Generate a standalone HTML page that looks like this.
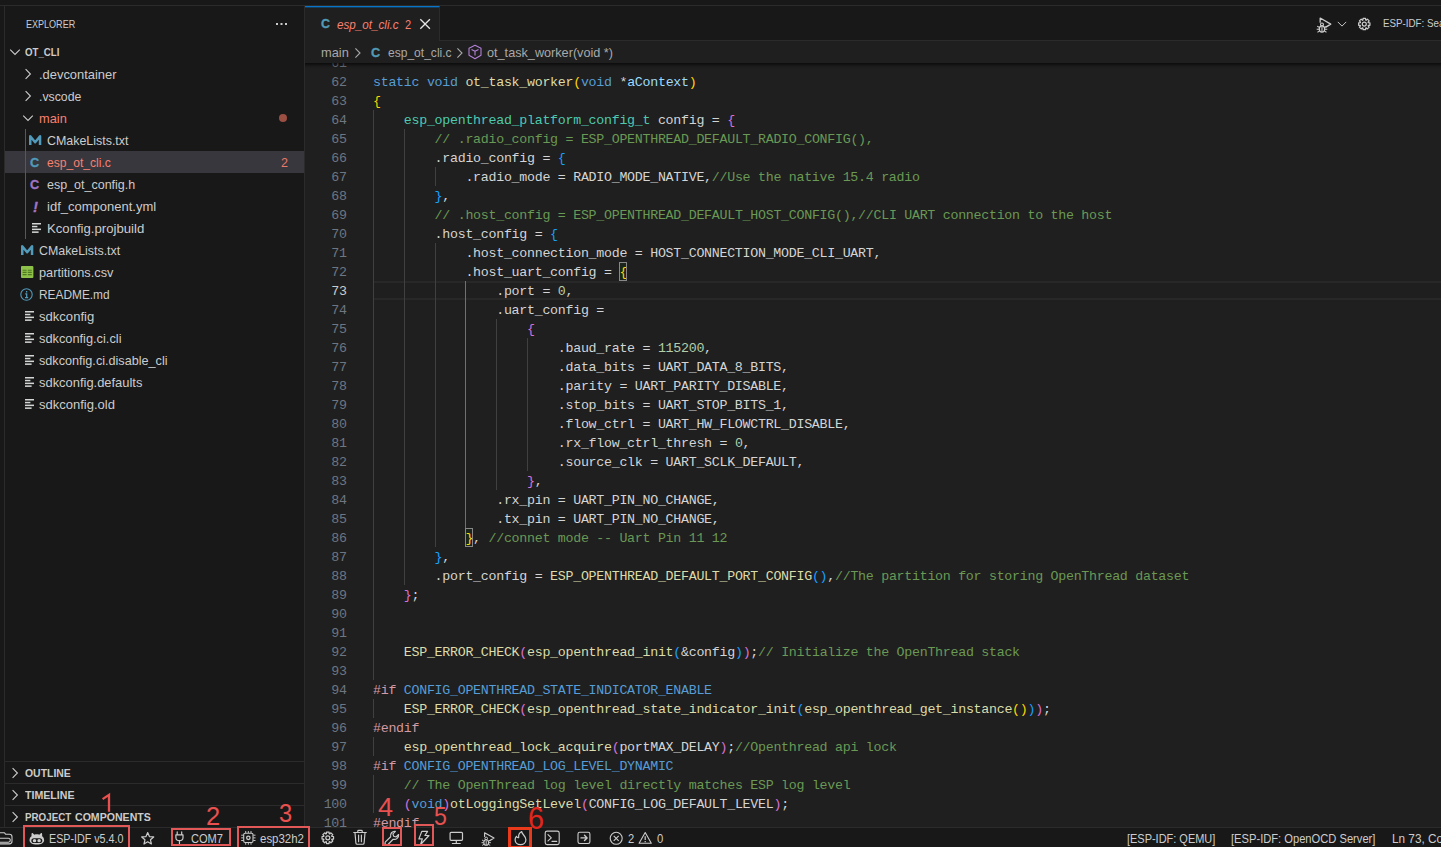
<!DOCTYPE html>
<html><head><meta charset="utf-8"><title>esp_ot_cli.c - ot_cli - Visual Studio Code</title>
<style>
*{box-sizing:border-box;margin:0;padding:0}
html,body{width:1441px;height:847px;overflow:hidden;background:#181818}
body{position:relative;font-family:'Liberation Sans',sans-serif;font-size:13px;color:#ccc}
.abs{position:absolute}
.t{position:absolute;white-space:pre;transform-origin:0 50%;font-family:'Liberation Sans',sans-serif}
#topline{left:0;top:5px;width:1441px;height:1px;background:#2b2b2b}
#leftline{left:4px;top:6px;width:1px;height:821px;background:#2b2b2b}
#sidebar{left:5px;top:6px;width:300px;height:821px;background:#181818;border-right:1px solid #2b2b2b}
#sel{left:5px;top:151px;width:299px;height:22px;background:#37373d}
#iguide{left:25px;top:129px;width:1px;height:110px;background:#585858}
.pline{left:5px;width:299px;height:1px;background:#2b2b2b}
#tabbar{left:305px;top:6px;width:1136px;height:35px;background:#181818;border-bottom:1px solid #2b2b2b}
#tab{left:305px;top:6px;width:135px;height:35px;background:#1f1f1f;border-top:1px solid #0a74c8;border-right:1px solid #2b2b2b;box-shadow:inset 0 1px 0 rgba(0,120,212,.35)}
#editor{left:305px;top:41px;width:1136px;height:786px;background:#1f1f1f;overflow:hidden}
#shadow{left:305px;top:63px;width:1136px;height:6px;background:linear-gradient(rgba(0,0,0,.62) 0,rgba(0,0,0,.5) 1px,rgba(0,0,0,.34) 2px,rgba(0,0,0,.18) 3px,rgba(0,0,0,.07) 4.5px,rgba(0,0,0,0) 6px)}
#bcbar{left:305px;top:41px;width:1136px;height:22px;background:#1f1f1f}
#status{left:0;top:827px;width:1441px;height:20px;background:#181818;border-top:1px solid #2b2b2b}
#code{left:0;top:0;width:1441px;height:827px;overflow:hidden;clip-path:inset(63px 0 0 305px)}
.ln{position:absolute;left:305px;width:42px;height:19px;line-height:19px;margin-top:.9px;text-align:right;color:#6e7681;font-family:'Liberation Mono',monospace;font-size:13.3px;letter-spacing:-.28px;padding-right:.28px}
.ln.cur{color:#cccccc}
.cl{position:absolute;left:373px;height:19px;line-height:19px;margin-top:.9px;white-space:pre;font-family:'Liberation Mono',monospace;font-size:13.3px;letter-spacing:-.28px;color:#d4d4d4}
.k{color:#569cd6}.f{color:#dcdcaa}.w{color:#d4d4d4}.p{color:#9cdcfe}.ty{color:#4ec9b0}.c{color:#6a9955}.n{color:#b5cea8}
.b1{color:#ffd700}.b2{color:#da70d6}.b3{color:#179fff}.pp{color:#d399a4}
.bx{outline:1px solid #888;outline-offset:-1px;padding:2.6px 0 1.4px;background:rgba(0,100,0,.09)}
.g{position:absolute;width:1px;background:#404040}
.ga{background:#707070}
#curline{left:373px;top:281px;width:1068px;height:19px;border-top:2px solid #282828;border-bottom:2px solid #282828}
.rb{position:absolute;border:2px solid #e25757}
svg{position:absolute;overflow:visible}
</style></head><body>
<div class="abs" id="topline"></div>
<div class="abs" id="sidebar"></div>
<div class="abs" id="leftline"></div>
<div class="abs" id="sel"></div>
<div class="abs" id="iguide"></div>
<div class="abs pline" style="top:761px"></div>
<div class="abs pline" style="top:783px"></div>
<div class="abs pline" style="top:805px"></div>
<div class="abs" id="tabbar"></div>
<div class="abs" id="editor"></div>
<div class="abs" id="tab"></div>
<div class="abs" id="bcbar"></div>
<div class="abs" id="code">
<div class="abs" id="curline"></div>
<div class="ln" style="top:53px">61</div>
<div class="ln" style="top:72px">62</div>
<div class="cl" style="top:72px"><span class="k">static</span><span class="w"> </span><span class="k">void</span><span class="w"> </span><span class="f">ot_task_worker</span><span class="b1">(</span><span class="k">void</span><span class="w"> *</span><span class="p">aContext</span><span class="b1">)</span></div>
<div class="ln" style="top:91px">63</div>
<div class="cl" style="top:91px"><span class="b1">{</span></div>
<div class="ln" style="top:110px">64</div>
<div class="cl" style="top:110px"><span class="w">    </span><span class="ty">esp_openthread_platform_config_t</span><span class="w"> config = </span><span class="b2">{</span></div>
<div class="ln" style="top:129px">65</div>
<div class="cl" style="top:129px"><span class="w">        </span><span class="c">// .radio_config = ESP_OPENTHREAD_DEFAULT_RADIO_CONFIG(),</span></div>
<div class="ln" style="top:148px">66</div>
<div class="cl" style="top:148px"><span class="w">        .radio_config = </span><span class="b3">{</span></div>
<div class="ln" style="top:167px">67</div>
<div class="cl" style="top:167px"><span class="w">            .radio_mode = RADIO_MODE_NATIVE,</span><span class="c">//Use the native 15.4 radio</span></div>
<div class="ln" style="top:186px">68</div>
<div class="cl" style="top:186px"><span class="w">        </span><span class="b3">}</span><span class="w">,</span></div>
<div class="ln" style="top:205px">69</div>
<div class="cl" style="top:205px"><span class="w">        </span><span class="c">// .host_config = ESP_OPENTHREAD_DEFAULT_HOST_CONFIG(),//CLI UART connection to the host</span></div>
<div class="ln" style="top:224px">70</div>
<div class="cl" style="top:224px"><span class="w">        .host_config = </span><span class="b3">{</span></div>
<div class="ln" style="top:243px">71</div>
<div class="cl" style="top:243px"><span class="w">            .host_connection_mode = HOST_CONNECTION_MODE_CLI_UART,</span></div>
<div class="ln" style="top:262px">72</div>
<div class="cl" style="top:262px"><span class="w">            .host_uart_config = </span><span class="b1 bx">{</span></div>
<div class="ln cur" style="top:281px">73</div>
<div class="cl" style="top:281px"><span class="w">                .port = </span><span class="n">0</span><span class="w">,</span></div>
<div class="ln" style="top:300px">74</div>
<div class="cl" style="top:300px"><span class="w">                .uart_config =</span></div>
<div class="ln" style="top:319px">75</div>
<div class="cl" style="top:319px"><span class="w">                    </span><span class="b2">{</span></div>
<div class="ln" style="top:338px">76</div>
<div class="cl" style="top:338px"><span class="w">                        .baud_rate = </span><span class="n">115200</span><span class="w">,</span></div>
<div class="ln" style="top:357px">77</div>
<div class="cl" style="top:357px"><span class="w">                        .data_bits = UART_DATA_8_BITS,</span></div>
<div class="ln" style="top:376px">78</div>
<div class="cl" style="top:376px"><span class="w">                        .parity = UART_PARITY_DISABLE,</span></div>
<div class="ln" style="top:395px">79</div>
<div class="cl" style="top:395px"><span class="w">                        .stop_bits = UART_STOP_BITS_1,</span></div>
<div class="ln" style="top:414px">80</div>
<div class="cl" style="top:414px"><span class="w">                        .flow_ctrl = UART_HW_FLOWCTRL_DISABLE,</span></div>
<div class="ln" style="top:433px">81</div>
<div class="cl" style="top:433px"><span class="w">                        .rx_flow_ctrl_thresh = </span><span class="n">0</span><span class="w">,</span></div>
<div class="ln" style="top:452px">82</div>
<div class="cl" style="top:452px"><span class="w">                        .source_clk = UART_SCLK_DEFAULT,</span></div>
<div class="ln" style="top:471px">83</div>
<div class="cl" style="top:471px"><span class="w">                    </span><span class="b2">}</span><span class="w">,</span></div>
<div class="ln" style="top:490px">84</div>
<div class="cl" style="top:490px"><span class="w">                .rx_pin = UART_PIN_NO_CHANGE,</span></div>
<div class="ln" style="top:509px">85</div>
<div class="cl" style="top:509px"><span class="w">                .tx_pin = UART_PIN_NO_CHANGE,</span></div>
<div class="ln" style="top:528px">86</div>
<div class="cl" style="top:528px"><span class="w">            </span><span class="b1 bx">}</span><span class="w">, </span><span class="c">//connet mode -- Uart Pin 11 12</span></div>
<div class="ln" style="top:547px">87</div>
<div class="cl" style="top:547px"><span class="w">        </span><span class="b3">}</span><span class="w">,</span></div>
<div class="ln" style="top:566px">88</div>
<div class="cl" style="top:566px"><span class="w">        .port_config = </span><span class="f">ESP_OPENTHREAD_DEFAULT_PORT_CONFIG</span><span class="b3">()</span><span class="w">,</span><span class="c">//The partition for storing OpenThread dataset</span></div>
<div class="ln" style="top:585px">89</div>
<div class="cl" style="top:585px"><span class="w">    </span><span class="b2">}</span><span class="w">;</span></div>
<div class="ln" style="top:604px">90</div>
<div class="ln" style="top:623px">91</div>
<div class="ln" style="top:642px">92</div>
<div class="cl" style="top:642px"><span class="w">    </span><span class="f">ESP_ERROR_CHECK</span><span class="b2">(</span><span class="f">esp_openthread_init</span><span class="b3">(</span><span class="w">&amp;config</span><span class="b3">)</span><span class="b2">)</span><span class="w">;</span><span class="c">// Initialize the OpenThread stack</span></div>
<div class="ln" style="top:661px">93</div>
<div class="ln" style="top:680px">94</div>
<div class="cl" style="top:680px"><span class="pp">#if</span><span class="w"> </span><span class="k">CONFIG_OPENTHREAD_STATE_INDICATOR_ENABLE</span></div>
<div class="ln" style="top:699px">95</div>
<div class="cl" style="top:699px"><span class="w">    </span><span class="f">ESP_ERROR_CHECK</span><span class="b2">(</span><span class="f">esp_openthread_state_indicator_init</span><span class="b3">(</span><span class="f">esp_openthread_get_instance</span><span class="b1">()</span><span class="b3">)</span><span class="b2">)</span><span class="w">;</span></div>
<div class="ln" style="top:718px">96</div>
<div class="cl" style="top:718px"><span class="pp">#endif</span></div>
<div class="ln" style="top:737px">97</div>
<div class="cl" style="top:737px"><span class="w">    </span><span class="f">esp_openthread_lock_acquire</span><span class="b2">(</span><span class="w">portMAX_DELAY</span><span class="b2">)</span><span class="w">;</span><span class="c">//Openthread api lock</span></div>
<div class="ln" style="top:756px">98</div>
<div class="cl" style="top:756px"><span class="pp">#if</span><span class="w"> </span><span class="k">CONFIG_OPENTHREAD_LOG_LEVEL_DYNAMIC</span></div>
<div class="ln" style="top:775px">99</div>
<div class="cl" style="top:775px"><span class="w">    </span><span class="c">// The OpenThread log level directly matches ESP log level</span></div>
<div class="ln" style="top:794px">100</div>
<div class="cl" style="top:794px"><span class="w">    </span><span class="b2">(</span><span class="k">void</span><span class="b2">)</span><span class="f">otLoggingSetLevel</span><span class="b2">(</span><span class="w">CONFIG_LOG_DEFAULT_LEVEL</span><span class="b2">)</span><span class="w">;</span></div>
<div class="ln" style="top:813px">101</div>
<div class="cl" style="top:813px"><span class="pp">#endif</span></div>
<div class="g" style="left:373.0px;top:110px;height:570px"></div>
<div class="g" style="left:373.0px;top:699px;height:19px"></div>
<div class="g" style="left:373.0px;top:737px;height:19px"></div>
<div class="g" style="left:373.0px;top:775px;height:38px"></div>
<div class="g" style="left:403.8px;top:129px;height:456px"></div>
<div class="g" style="left:434.6px;top:167px;height:19px"></div>
<div class="g" style="left:434.6px;top:243px;height:304px"></div>
<div class="g ga" style="left:465.4px;top:281px;height:247px"></div>
<div class="g" style="left:496.2px;top:319px;height:171px"></div>
<div class="g" style="left:527.0px;top:338px;height:133px"></div>
</div>
<div class="abs" id="shadow"></div>
<div class="abs" id="status"></div>
<svg style="left:7px;top:44px" width="16" height="16" viewBox="0 0 16 16" ><path d="M3.2 5.6 L8 10.4 L12.8 5.6" fill="none" stroke="#cccccc" stroke-width="1.1" /></svg>
<svg style="left:20px;top:66px" width="16" height="16" viewBox="0 0 16 16" ><path d="M5.6 3.2 L10.4 8 L5.6 12.8" fill="none" stroke="#cccccc" stroke-width="1.1" /></svg>
<svg style="left:20px;top:88px" width="16" height="16" viewBox="0 0 16 16" ><path d="M5.6 3.2 L10.4 8 L5.6 12.8" fill="none" stroke="#cccccc" stroke-width="1.1" /></svg>
<svg style="left:20px;top:110px" width="16" height="16" viewBox="0 0 16 16" ><path d="M3.2 5.6 L8 10.4 L12.8 5.6" fill="none" stroke="#cccccc" stroke-width="1.1" /></svg>
<svg style="left:7px;top:765px" width="16" height="16" viewBox="0 0 16 16" ><path d="M5.6 3.2 L10.4 8 L5.6 12.8" fill="none" stroke="#cccccc" stroke-width="1.1" /></svg>
<svg style="left:7px;top:787px" width="16" height="16" viewBox="0 0 16 16" ><path d="M5.6 3.2 L10.4 8 L5.6 12.8" fill="none" stroke="#cccccc" stroke-width="1.1" /></svg>
<svg style="left:7px;top:809px" width="16" height="16" viewBox="0 0 16 16" ><path d="M5.6 3.2 L10.4 8 L5.6 12.8" fill="none" stroke="#cccccc" stroke-width="1.1" /></svg>
<div class="abs" style="left:276px;top:23px;width:2px;height:2px;background:#ccc;box-shadow:4.5px 0 0 #ccc,9px 0 0 #ccc"></div>
<div class="abs" style="left:279px;top:114px;width:8px;height:8px;border-radius:4px;background:#9b4f43"></div>
<svg style="left:32.3px;top:223.2px" width="10" height="10" viewBox="0 0 10 10"><rect x="0" y="0" width="9" height="1.5" fill="#d4d7d6"/><rect x="0" y="2.8" width="5.4" height="1.5" fill="#d4d7d6"/><rect x="0" y="5.6" width="9" height="1.5" fill="#d4d7d6"/><rect x="0" y="8.4" width="6.6" height="1.5" fill="#d4d7d6"/></svg>
<svg style="left:24.5px;top:311.2px" width="10" height="10" viewBox="0 0 10 10"><rect x="0" y="0" width="9" height="1.5" fill="#d4d7d6"/><rect x="0" y="2.8" width="5.4" height="1.5" fill="#d4d7d6"/><rect x="0" y="5.6" width="9" height="1.5" fill="#d4d7d6"/><rect x="0" y="8.4" width="6.6" height="1.5" fill="#d4d7d6"/></svg>
<svg style="left:24.5px;top:333.2px" width="10" height="10" viewBox="0 0 10 10"><rect x="0" y="0" width="9" height="1.5" fill="#d4d7d6"/><rect x="0" y="2.8" width="5.4" height="1.5" fill="#d4d7d6"/><rect x="0" y="5.6" width="9" height="1.5" fill="#d4d7d6"/><rect x="0" y="8.4" width="6.6" height="1.5" fill="#d4d7d6"/></svg>
<svg style="left:24.5px;top:355.2px" width="10" height="10" viewBox="0 0 10 10"><rect x="0" y="0" width="9" height="1.5" fill="#d4d7d6"/><rect x="0" y="2.8" width="5.4" height="1.5" fill="#d4d7d6"/><rect x="0" y="5.6" width="9" height="1.5" fill="#d4d7d6"/><rect x="0" y="8.4" width="6.6" height="1.5" fill="#d4d7d6"/></svg>
<svg style="left:24.5px;top:377.2px" width="10" height="10" viewBox="0 0 10 10"><rect x="0" y="0" width="9" height="1.5" fill="#d4d7d6"/><rect x="0" y="2.8" width="5.4" height="1.5" fill="#d4d7d6"/><rect x="0" y="5.6" width="9" height="1.5" fill="#d4d7d6"/><rect x="0" y="8.4" width="6.6" height="1.5" fill="#d4d7d6"/></svg>
<svg style="left:24.5px;top:399.2px" width="10" height="10" viewBox="0 0 10 10"><rect x="0" y="0" width="9" height="1.5" fill="#d4d7d6"/><rect x="0" y="2.8" width="5.4" height="1.5" fill="#d4d7d6"/><rect x="0" y="5.6" width="9" height="1.5" fill="#d4d7d6"/><rect x="0" y="8.4" width="6.6" height="1.5" fill="#d4d7d6"/></svg>
<svg style="left:28.75px;top:134.8px" width="12.3" height="10" viewBox="0 0 12.3 10"><path d="M1.25 10 V1.2 L6.15 7.2 L11.05 1.2 V10" fill="none" stroke="#519aba" stroke-width="2.5" stroke-linejoin="round"/></svg>
<svg style="left:20.6px;top:244.6px" width="12.3" height="10" viewBox="0 0 12.3 10"><path d="M1.25 10 V1.2 L6.15 7.2 L11.05 1.2 V10" fill="none" stroke="#519aba" stroke-width="2.5" stroke-linejoin="round"/></svg>
<svg style="left:20.6px;top:266px" width="12.4" height="12" viewBox="0 0 12.4 12"><rect width="12.4" height="12" rx="1" fill="#8dc149"/><path d="M1.6 4.2H5.6M6.8 4.2H10.8M1.6 6.4H5.6M6.8 6.4H10.8M1.6 8.6H5.6M6.8 8.6H10.8" stroke="#4f7a22" stroke-width="1.1"/></svg>
<svg style="left:20.4px;top:287.8px" width="13" height="13" viewBox="0 0 13 13"><circle cx="6.5" cy="6.5" r="5.7" fill="none" stroke="#519aba" stroke-width="1.1"/><path d="M6.6 3.1v1.5M5.2 5.8h1.5v3.6M5 9.6h3.2" stroke="#519aba" stroke-width="1.3" fill="none"/></svg>
<svg style="left:417px;top:16px" width="16" height="16" viewBox="0 0 16 16" ><path d="M3.3 3.2 L12.9 12.8 M12.9 3.2 L3.3 12.8" fill="none" stroke="#e4e4e4" stroke-width="1.3" /></svg>
<svg style="left:350px;top:44.5px" width="16" height="16" viewBox="0 0 16 16" ><path d="M5.4 3.4 L10 8 L5.4 12.6" fill="none" stroke="#a9a9a9" stroke-width="1.1" /></svg>
<svg style="left:452px;top:44.5px" width="16" height="16" viewBox="0 0 16 16" ><path d="M5.4 3.4 L10 8 L5.4 12.6" fill="none" stroke="#a9a9a9" stroke-width="1.1" /></svg>
<svg style="left:467px;top:44px" width="16" height="16" viewBox="0 0 16 16" ><path d="M8 1.3 L14 4.3 V11.3 L8 14.7 L2 11.3 V4.3 Z M4.5 5.5 L8 7.3 L11.5 5.5 M8 7.3 V11.5" fill="none" stroke="#b180d7" stroke-width="1.1" stroke-linejoin="round"/></svg>
<svg style="left:1315.3px;top:15.0px" width="18" height="18" viewBox="0 0 16 16" ><path d="M4.6 6.4 V2.7 L14 8.1 L9.7 10.8" fill="none" stroke="#cccccc" stroke-width="1.15" stroke-linejoin="round" stroke-linecap="round"/><ellipse cx="6.2" cy="12.5" rx="2.4" ry="2.8" fill="none" stroke="#ccc" stroke-width="1.1"/><circle cx="6.2" cy="8.4" r="1.3" fill="none" stroke="#ccc" stroke-width="1.0"/><path d="M3.8 11 L2 10 M3.7 12.7 H1.5 M4 14.3 L2.2 15.4 M8.6 11 L10.4 10 M8.7 12.7 H10.9 M8.4 14.3 L10.2 15.4 M6.2 10.6 V15" fill="none" stroke="#cccccc" stroke-width="0.95" /></svg>
<svg style="left:1334.5px;top:17.3px" width="14" height="14" viewBox="0 0 16 16" ><path d="M3.2 5.6 L8 10.4 L12.8 5.6" fill="none" stroke="#cccccc" stroke-width="1.1" /></svg>
<svg style="left:0;top:822px" width="1441" height="25" viewBox="0 822 1441 25"><path d="M-1 832.8 H4.5 L5.8 834.3 H9.4 Q12 834.3 12 836.8 V841.3 Q12 843.9 9.4 843.9 H-1 M-1 838.3 H8.2 Q10.3 838.3 10.3 840.3 Q10.3 842.2 8.4 842.2 H-1" fill="none" stroke="#cccccc" stroke-width="1.1" stroke-linejoin="round" stroke-linecap="round"/><g transform="translate(29.5,832.3) scale(0.915,0.9)"><path d="M2.2 2.0 C2.2 0.6 3.0 0.2 3.9 1.2 L5.3 2.6 C7 2.1 9 2.1 10.7 2.6 L12.1 1.2 C13 0.2 13.8 0.6 13.8 2.0 L13.8 4.4 C15.4 5.6 16 7.2 16 8.8 C16 11.8 12.6 13.6 8 13.6 C3.4 13.6 0 11.8 0 8.8 C0 7.2 0.6 5.6 2.2 4.4 Z M4.8 6.6 C3.0 6.6 2.0 7.8 2.0 9.3 C2.0 10.9 3.1 12 4.8 12 L11.2 12 C12.9 12 14 10.9 14 9.3 C14 7.8 13 6.6 11.2 6.6 Z" fill="#cccccc" fill-rule="evenodd"/><ellipse cx="5.5" cy="9.3" rx="1.9" ry="1.8" fill="#ccc"/><ellipse cx="10.5" cy="9.3" rx="1.9" ry="1.8" fill="#ccc"/></g><path d="M147.70 832.60 L149.40 836.55 L153.69 836.95 L150.46 839.80 L151.40 844.00 L147.70 841.80 L144.00 844.00 L144.94 839.80 L141.71 836.95 L146.00 836.55Z" fill="none" stroke="#cccccc" stroke-width="1.2" stroke-linejoin="round" stroke-linecap="round"/><path d="M177.2 831.9 V834.6 M181.7 831.9 V834.6 M175.9 834.8 H183.0 V837.4 Q183.0 840.6 179.45 840.6 Q175.9 840.6 175.9 837.4 Z M179.45 840.8 V843.6" fill="none" stroke="#cccccc" stroke-width="1.2" stroke-linejoin="round" stroke-linecap="round"/><rect x="243.7" y="833.2" width="9.3" height="9.3" rx="1.4" fill="none" stroke="#ccc" stroke-width="1.1"/><circle cx="248.35" cy="837.85" r="1.7" fill="none" stroke="#ccc" stroke-width="1.3"/><path d="M245.7 831 V833 M245.7 842.7 V844.7 M248.35 831 V833 M248.35 842.7 V844.7 M251.0 831 V833 M251.0 842.7 V844.7 M241.2 835.2 H243.4 M253.3 835.2 H255.5 M241.2 837.85 H243.4 M253.3 837.85 H255.5 M241.2 840.5 H243.4 M253.3 840.5 H255.5 " fill="none" stroke="#cccccc" stroke-width="0.95" /><path d="M326.41 833.73 L326.51 832.04 L329.09 832.04 L329.19 833.73 L329.69 833.94 L330.96 832.82 L332.78 834.64 L331.66 835.91 L331.87 836.41 L333.56 836.51 L333.56 839.09 L331.87 839.19 L331.66 839.69 L332.78 840.96 L330.96 842.78 L329.69 841.66 L329.19 841.87 L329.09 843.56 L326.51 843.56 L326.41 841.87 L325.91 841.66 L324.64 842.78 L322.82 840.96 L323.94 839.69 L323.73 839.19 L322.04 839.09 L322.04 836.51 L323.73 836.41 L323.94 835.91 L322.82 834.64 L324.64 832.82 L325.91 833.94Z" fill="none" stroke="#cccccc" stroke-width="1.2" stroke-linejoin="round" stroke-linecap="round"/><circle cx="327.8" cy="837.8" r="2" fill="none" stroke="#ccc" stroke-width="1.2"/><path d="M357.8 832.3 V831.1 Q357.8 830.4 358.5 830.4 H361.5 Q362.2 830.4 362.2 831.1 V832.3 M353.7 832.5 H366.3 M355 832.9 L355.9 843.1 Q356 844.2 357.1 844.2 H362.9 Q364 844.2 364.1 843.1 L365 832.9 M358.6 835 V841.7 M361.4 835 V841.7" fill="none" stroke="#cccccc" stroke-width="1.15" stroke-linejoin="round" stroke-linecap="round"/><g transform="translate(383.4,829.6) scale(1.07)"><path d="M14.2 4.6 a4 4 0 0 1 -5.1 4.4 L4.3 13.9 a1.7 1.7 0 0 1 -2.4 -2.4 L6.8 6.7 a4 4 0 0 1 4.4 -5.1 L8.9 4 l0.7 2.2 2.2 0.7 z" fill="none" stroke="#cccccc" stroke-width="1.1" stroke-linejoin="round" stroke-linecap="round"/></g><path d="M421.8 831.4 H427.6 L424.9 835.5 H429 L420.6 844.5 L422.3 838.9 H418.9 Z" fill="none" stroke="#cccccc" stroke-width="1.2" stroke-linejoin="round" stroke-linecap="round"/><rect x="450.1" y="832.3" width="12.4" height="8" rx="1" fill="none" stroke="#ccc" stroke-width="1.2"/><path d="M456.3 840.4 V843.2 M451.9 843.5 H460.7" fill="none" stroke="#cccccc" stroke-width="1.2" /><g transform="translate(512,829.5)"><path d="M9.7 2.1 C10 5 13.9 6.5 13.9 10.3 C13.9 13.1 11.6 15.1 8.5 15.1 C5.4 15.1 3.1 13.1 3.1 10.3 C3.1 8.8 3.7 7.6 4.6 6.8 C4.8 7.7 5.6 8.3 6.7 8.1 C6.3 5.7 7.6 3.3 9.7 2.1 Z" fill="none" stroke="#cccccc" stroke-width="1.2" stroke-linejoin="round" stroke-linecap="round"/></g><rect x="545.2" y="831.1" width="14" height="13.5" rx="1.9" fill="none" stroke="#ccc" stroke-width="1.1"/><path d="M548 834.7 L551.3 837.8 L548 840.9 M552 841.4 H556.7" fill="none" stroke="#cccccc" stroke-width="1.15" stroke-linejoin="round" stroke-linecap="round"/><rect x="578" y="832.2" width="11.9" height="11.3" rx="1.7" fill="none" stroke="#ccc" stroke-width="1.1"/><path d="M581 837.9 H586.8 M584.5 835.3 L587.1 837.9 L584.5 840.5" fill="none" stroke="#cccccc" stroke-width="1.4" stroke-linejoin="round" stroke-linecap="round"/><circle cx="616.2" cy="838.3" r="6" fill="none" stroke="#ccc" stroke-width="1.1"/><path d="M613.7 835.8 L618.7 840.8 M618.7 835.8 L613.7 840.8" fill="none" stroke="#cccccc" stroke-width="1.1" /><path d="M645.2 832.5 L651.3 843.3 H639.1 Z" fill="none" stroke="#cccccc" stroke-width="1.1" stroke-linejoin="round" stroke-linecap="round"/><path d="M645.2 836.3 V839.9 M645.2 841.1 V842.3" fill="none" stroke="#cccccc" stroke-width="1.2" /></svg>
<svg style="left:479.8px;top:829.8px" width="16" height="16" viewBox="0 0 16 16" ><path d="M4.6 6.4 V2.7 L14 8.1 L9.7 10.8" fill="none" stroke="#cccccc" stroke-width="1.15" stroke-linejoin="round" stroke-linecap="round"/><ellipse cx="6.2" cy="12.5" rx="2.4" ry="2.8" fill="none" stroke="#ccc" stroke-width="1.1"/><circle cx="6.2" cy="8.4" r="1.3" fill="none" stroke="#ccc" stroke-width="1.0"/><path d="M3.8 11 L2 10 M3.7 12.7 H1.5 M4 14.3 L2.2 15.4 M8.6 11 L10.4 10 M8.7 12.7 H10.9 M8.4 14.3 L10.2 15.4 M6.2 10.6 V15" fill="none" stroke="#cccccc" stroke-width="0.95" /></svg>
<svg style="left:1350px;top:10px" width="30" height="30" viewBox="1350 10 30 30"><path d="M1362.94 20.08 L1363.03 18.39 L1365.57 18.39 L1365.66 20.08 L1366.15 20.28 L1367.41 19.15 L1369.20 20.94 L1368.07 22.20 L1368.27 22.69 L1369.96 22.78 L1369.96 25.32 L1368.27 25.41 L1368.07 25.90 L1369.20 27.16 L1367.41 28.95 L1366.15 27.82 L1365.66 28.02 L1365.57 29.71 L1363.03 29.71 L1362.94 28.02 L1362.45 27.82 L1361.19 28.95 L1359.40 27.16 L1360.53 25.90 L1360.33 25.41 L1358.64 25.32 L1358.64 22.78 L1360.33 22.69 L1360.53 22.20 L1359.40 20.94 L1361.19 19.15 L1362.45 20.28Z" fill="none" stroke="#cccccc" stroke-width="1.2" stroke-linejoin="round" stroke-linecap="round"/><circle cx="1364.3" cy="24.05" r="2" fill="none" stroke="#ccc" stroke-width="1.2"/></svg>
<span class="t" style="left:25.60px;top:14.00px;font-size:11px;color:#cccccc;line-height:20px;transform:scaleX(0.8211);">EXPLORER</span>
<span class="t" style="left:25.00px;top:42.00px;font-size:11px;color:#cccccc;line-height:20px;font-weight:700;transform:scaleX(0.8792);">OT_CLI</span>
<span class="t" style="left:39.00px;top:64.90px;font-size:13px;color:#cccccc;line-height:20px;transform:scaleX(0.9928);">.devcontainer</span>
<span class="t" style="left:39.00px;top:86.90px;font-size:13px;color:#cccccc;line-height:20px;transform:scaleX(0.9439);">.vscode</span>
<span class="t" style="left:39.00px;top:108.90px;font-size:13px;color:#f88070;line-height:20px;transform:scaleX(0.9863);">main</span>
<span class="t" style="left:47.25px;top:130.90px;font-size:13px;color:#cccccc;line-height:20px;transform:scaleX(0.9560);">CMakeLists.txt</span>
<span class="t" style="left:47.25px;top:152.90px;font-size:13px;color:#f88070;line-height:20px;transform:scaleX(0.9293);">esp_ot_cli.c</span>
<span class="t" style="left:47.25px;top:174.90px;font-size:13px;color:#cccccc;line-height:20px;transform:scaleX(0.9608);">esp_ot_config.h</span>
<span class="t" style="left:47.10px;top:196.90px;font-size:13px;color:#cccccc;line-height:20px;">idf_component.yml</span>
<span class="t" style="left:47.25px;top:218.90px;font-size:13px;color:#cccccc;line-height:20px;transform:scaleX(1.0112);">Kconfig.projbuild</span>
<span class="t" style="left:39.40px;top:240.90px;font-size:13px;color:#cccccc;line-height:20px;transform:scaleX(0.9525);">CMakeLists.txt</span>
<span class="t" style="left:39.40px;top:262.90px;font-size:13px;color:#cccccc;line-height:20px;transform:scaleX(0.9806);">partitions.csv</span>
<span class="t" style="left:39.40px;top:284.90px;font-size:13px;color:#cccccc;line-height:20px;transform:scaleX(0.9134);">README.md</span>
<span class="t" style="left:39.00px;top:306.90px;font-size:13px;color:#cccccc;line-height:20px;transform:scaleX(1.0051);">sdkconfig</span>
<span class="t" style="left:39.00px;top:328.90px;font-size:13px;color:#cccccc;line-height:20px;transform:scaleX(0.9843);">sdkconfig.ci.cli</span>
<span class="t" style="left:39.00px;top:350.90px;font-size:13px;color:#cccccc;line-height:20px;transform:scaleX(0.9718);">sdkconfig.ci.disable_cli</span>
<span class="t" style="left:39.00px;top:372.90px;font-size:13px;color:#cccccc;line-height:20px;transform:scaleX(0.9935);">sdkconfig.defaults</span>
<span class="t" style="left:39.00px;top:394.90px;font-size:13px;color:#cccccc;line-height:20px;">sdkconfig.old</span>
<span class="t" style="left:280.60px;top:153.20px;font-size:12px;color:#e9796a;line-height:20px;transform:scaleX(1.0467);">2</span>
<span class="t" style="left:25.30px;top:763.00px;font-size:11px;color:#cccccc;line-height:20px;font-weight:700;transform:scaleX(0.9486);">OUTLINE</span>
<span class="t" style="left:24.90px;top:785.00px;font-size:11px;color:#cccccc;line-height:20px;font-weight:700;transform:scaleX(0.9641);">TIMELINE</span>
<span class="t" style="left:24.90px;top:807.00px;font-size:11px;color:#cccccc;line-height:20px;font-weight:700;transform:scaleX(0.8890);">PROJECT</span>
<span class="t" style="left:74.70px;top:807.00px;font-size:11px;color:#cccccc;line-height:20px;font-weight:700;transform:scaleX(0.9614);">COMPONENTS</span>
<span class="t" style="left:30.40px;top:152.80px;font-size:13.5px;color:#519aba;line-height:20px;font-weight:700;transform:scaleX(0.9436);-webkit-text-stroke:.35px #519aba;">C</span>
<span class="t" style="left:30.40px;top:174.80px;font-size:13.5px;color:#a074c4;line-height:20px;font-weight:700;transform:scaleX(0.9436);-webkit-text-stroke:.35px #a074c4;">C</span>
<span class="t" style="left:32.60px;top:196.50px;font-size:14.5px;color:#a074c4;line-height:20px;font-weight:700;font-style:italic;transform:scaleX(1.0323);-webkit-text-stroke:.3px #a074c4;">!</span>
<span class="t" style="left:320.50px;top:13.80px;font-size:13.5px;color:#519aba;line-height:20px;font-weight:700;transform:scaleX(0.9231);-webkit-text-stroke:.35px #519aba;">C</span>
<span class="t" style="left:370.80px;top:42.90px;font-size:13.5px;color:#519aba;line-height:20px;font-weight:700;transform:scaleX(0.9436);-webkit-text-stroke:.35px #519aba;">C</span>
<span class="t" style="left:337.40px;top:14.90px;font-size:13px;color:#f88070;line-height:20px;font-style:italic;transform:scaleX(0.8972);">esp_ot_cli.c</span>
<span class="t" style="left:405.00px;top:14.90px;font-size:12px;color:#f88070;line-height:20px;transform:scaleX(0.9271);">2</span>
<span class="t" style="left:321.40px;top:43.40px;font-size:13px;color:#a9a9a9;line-height:20px;transform:scaleX(0.9863);">main</span>
<span class="t" style="left:387.70px;top:43.40px;font-size:13px;color:#a9a9a9;line-height:20px;transform:scaleX(0.9264);">esp_ot_cli.c</span>
<span class="t" style="left:487.00px;top:43.40px;font-size:13px;color:#a9a9a9;line-height:20px;transform:scaleX(0.9743);">ot_task_worker(void *)</span>
<span class="t" style="left:1382.80px;top:13.40px;font-size:11px;color:#cccccc;line-height:20px;transform:scaleX(0.8891);">ESP-IDF: Search</span>
<span class="t" style="left:48.90px;top:828.90px;font-size:12px;color:#cccccc;line-height:20px;transform:scaleX(0.8924);">ESP-IDF v5.4.0</span>
<span class="t" style="left:191.00px;top:828.90px;font-size:12px;color:#cccccc;line-height:20px;transform:scaleX(0.9229);">COM7</span>
<span class="t" style="left:259.60px;top:828.90px;font-size:12px;color:#cccccc;line-height:20px;transform:scaleX(0.9555);">esp32h2</span>
<span class="t" style="left:627.50px;top:828.90px;font-size:12px;color:#cccccc;line-height:20px;transform:scaleX(0.9271);">2</span>
<span class="t" style="left:656.70px;top:828.90px;font-size:12px;color:#cccccc;line-height:20px;transform:scaleX(0.9421);">0</span>
<span class="t" style="left:1126.50px;top:828.90px;font-size:12px;color:#cccccc;line-height:20px;transform:scaleX(0.9133);">[ESP-IDF: QEMU]</span>
<span class="t" style="left:1231.30px;top:828.90px;font-size:12px;color:#cccccc;line-height:20px;transform:scaleX(0.9294);">[ESP-IDF: OpenOCD Server]</span>
<span class="t" style="left:1392.20px;top:828.90px;font-size:12px;color:#cccccc;line-height:20px;transform:scaleX(0.9805);">Ln 73, Col 10</span>
<span class="t" style="left:205.60px;top:806.00px;font-size:26px;color:#e8514f;line-height:20px;transform:scaleX(0.9800);">2</span>
<span class="t" style="left:278.60px;top:802.60px;font-size:26px;color:#e8514f;line-height:20px;transform:scaleX(0.9100);">3</span>
<span class="t" style="left:377.50px;top:796.60px;font-size:26px;color:#e8514f;line-height:20px;transform:scaleX(1.0400);">4</span>
<span class="t" style="left:434.20px;top:805.50px;font-size:26px;color:#e8514f;line-height:20px;transform:scaleX(0.8900);">5</span>
<span class="t" style="left:528.00px;top:808.00px;font-size:30.6px;color:#e2261c;line-height:20px;transform:scaleX(0.9400);">6</span>
<div class="rb" style="left:23px;top:825px;width:107px;height:24px"></div>
<div class="rb" style="left:171px;top:828px;width:60px;height:18px"></div>
<div class="rb" style="left:237px;top:826px;width:73px;height:23px"></div>
<div class="rb" style="left:382px;top:827px;width:20px;height:19px"></div>
<div class="rb" style="left:414px;top:824px;width:20px;height:22px"></div>
<div class="rb" style="left:508px;top:827px;width:24px;height:22px;border:3px solid #ea3a1c"></div>
<svg style="left:0;top:790px" width="200" height="30" viewBox="0 790 200 30"><path d="M102.6 799.1 L109 794.9 V811.8" fill="none" stroke="#e8514f" stroke-width="2.3" stroke-linejoin="miter"/></svg>

</body></html>
